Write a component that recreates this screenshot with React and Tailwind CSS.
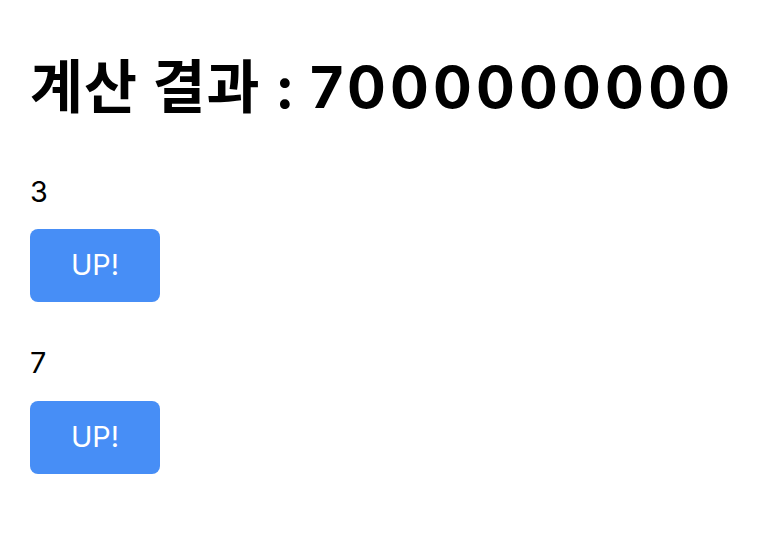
import React, { useState } from 'react';

const Counter = ({ initial }) => {
  const [count, setCount] = useState(initial);
  return (
    <div className="flex flex-col items-start">
      <p className="text-[28.8px] leading-[35px] text-black">{count}</p>
      <button
        onClick={() => setCount(count + 1)}
        className="mt-[20.5px] w-[130px] h-[73px] rounded-[8px] bg-[#478ef6] text-white text-[28.8px] leading-none"
      >
        UP!
      </button>
    </div>
  );
};

const App = () => {
  return (
    <div
      className="min-h-screen bg-white pl-[30px] flex flex-col items-start"
      style={{ fontFamily: 'Inter, "Noto Sans CJK KR", sans-serif' }}
    >
      <h1 className="mt-[52px] text-[57.6px] leading-[70px] font-bold text-black whitespace-nowrap">
        <span className="tracking-[1px]">계산 결과 : </span>
        <span className="tracking-[4.2px]">7000000000</span>
      </h1>
      <div className="mt-[51.5px]">
        <Counter initial={3} />
      </div>
      <div className="mt-[43px]">
        <Counter initial={7} />
      </div>
    </div>
  );
};

export default App;
